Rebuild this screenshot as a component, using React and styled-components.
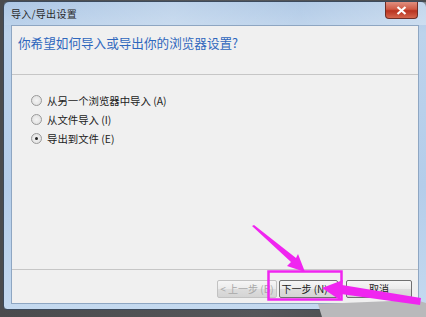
import React, { useState } from 'react'
import styled, { createGlobalStyle } from 'styled-components'

const GlobalStyle = createGlobalStyle`
	html, body {
		margin: 0;
		padding: 0;
		background: #4e4f51;
		overflow: hidden;
	}
	body {
		font-family: "Noto Sans CJK SC", "Noto Sans", sans-serif;
	}
`

const Page = styled.div`
	position: relative;
	width: 426px;
	height: 317px;
	overflow: hidden;
	background: linear-gradient(90deg, #4a4b4d 0%, #55575a 60%, #4a4b4d 100%);
`

const Window = styled.div`
	margin: 1px 0 0 3px;
	width: 424px;
	height: 309px;
	box-sizing: border-box;
	border: 1px solid #3c4a5c;
	border-radius: 6px 6px 4px 4px;
	background: linear-gradient(180deg, #a9c4e3 0%, #bcd3ec 10%, #b4cdea 60%, #c4d9ef 100%);
	display: flex;
	flex-direction: column;
`

const TitleBar = styled.div`
	height: 23px;
	display: flex;
	justify-content: space-between;
	align-items: flex-start;
	padding: 0 8px 0 7px;
	background: linear-gradient(90deg, rgba(255,255,255,0.05), rgba(255,255,255,0.25) 40%, rgba(255,255,255,0.1) 70%, rgba(255,255,255,0.3));
`

const Title = styled.span`
	font-size: 10px;
	line-height: 24px;
	color: #2a2a2a;
	letter-spacing: 0.3px;
`

const CloseButton = styled.div`
	width: 33px;
	height: 17px;
	box-sizing: border-box;
	border: 1px solid #6e2e26;
	border-top: none;
	border-radius: 0 0 4px 4px;
	background: linear-gradient(180deg, #e08f7f 0%, #cf5a45 45%, #b8321f 55%, #d5664d 100%);
	display: flex;
	align-items: center;
	justify-content: center;
`

const Content = styled.div`
	flex: 1;
	margin: 0 7px 5px 7px;
	background: #f0f0f0;
	border: 1px solid #8ea6c2;
	display: flex;
	flex-direction: column;
`

const Header = styled.div`
	height: 49px;
	box-sizing: border-box;
	padding: 9px 6px;
	border-bottom: 1px solid #c6c6c6;
`

const Instruction = styled.h1`
	margin: 0;
	font-size: 12.6px;
	line-height: 16px;
	font-weight: normal;
	color: #2f67bd;
`

const Body = styled.div`
	flex: 1;
	display: flex;
	flex-direction: column;
	padding: 16px 0 0 19px;
`

const Option = styled.label`
	height: 19px;
	display: flex;
	align-items: center;
	gap: 5px;
	font-size: 10.4px;
	color: #222;
`

const Radio = styled.span`
	width: 9px;
	height: 9px;
	border-radius: 50%;
	border: 1px solid #9a9a9a;
	background: radial-gradient(circle, #f4f4f4 0%, #dcdcdc 100%);
	display: flex;
	align-items: center;
	justify-content: center;

	&::after {
		content: '';
		width: 3px;
		height: 3px;
		border-radius: 50%;
		background: ${props => (props.checked ? '#222' : 'transparent')};
	}
`

const Footer = styled.div`
	height: 34px;
	box-sizing: border-box;
	border-top: 1px solid #c6c6c6;
	display: flex;
	justify-content: flex-end;
	align-items: flex-start;
	padding: 10px 6px 0 0;
`

const Button = styled.button`
	width: ${props => props.w}px;
	height: 18px;
	margin-left: ${props => props.gap || 0}px;
	padding: 0;
	box-sizing: border-box;
	font-family: inherit;
	font-size: 10px;
	line-height: 16px;
	color: ${props => (props.disabled ? '#a8a8a8' : '#1a1a1a')};
	border: 1px solid ${props => (props.disabled ? '#c2c2c2' : '#707070')};
	border-radius: 2px;
	background: linear-gradient(180deg, #f6f6f6 0%, #ebebeb 50%, #dddddd 51%, #d4d4d4 100%);
	white-space: nowrap;
`

const Overlay = styled.svg`
	position: absolute;
	left: 0;
	top: 0;
	pointer-events: none;
`

const options = [
	{ label: '从另一个浏览器中导入 (A)' },
	{ label: '从文件导入 (I)' },
	{ label: '导出到文件 (E)' },
]

export default () => {
	const [selected, setSelected] = useState(2)

	return (
		<Page>
			<GlobalStyle />
			<Window>
				<TitleBar>
					<Title>导入/导出设置</Title>
					<CloseButton>
						<svg width="11" height="9" viewBox="0 0 11 9">
							<path d="M1.5 1 L9.5 8 M9.5 1 L1.5 8" stroke="#fff" strokeWidth="2.2" />
						</svg>
					</CloseButton>
				</TitleBar>
				<Content>
					<Header>
						<Instruction>你希望如何导入或导出你的浏览器设置?</Instruction>
					</Header>
					<Body>
						{options.map((o, i) => (
							<Option key={i} onClick={() => setSelected(i)}>
								<Radio checked={selected === i} />
								{o.label}
							</Option>
						))}
					</Body>
					<Footer>
						<Button w={60} disabled>&lt; 上一步 (B)</Button>
						<Button w={59} gap={2}>下一步 (N) &gt;</Button>
						<Button w={66} gap={8}>取消</Button>
					</Footer>
				</Content>
			</Window>
			<Overlay width="426" height="317" viewBox="0 0 426 317">
				<path d="M318 304 L416 300 L426 303 L426 317 L322 317 Z" fill="#b9b9bb" />
				<rect x="268.5" y="271.5" width="73" height="28" fill="none" stroke="#f025f0" strokeWidth="2.5" />
				<path d="M252 226 L254 225 L296 258 L298 254 L305 272 L287 266 L291 262 Z" fill="#f025f0" />
				<path d="M322 288 L343 280 L342 285 L421 298 L420 305 L341 294 L340 300 Z" fill="#f025f0" />
			</Overlay>
		</Page>
	)
}
